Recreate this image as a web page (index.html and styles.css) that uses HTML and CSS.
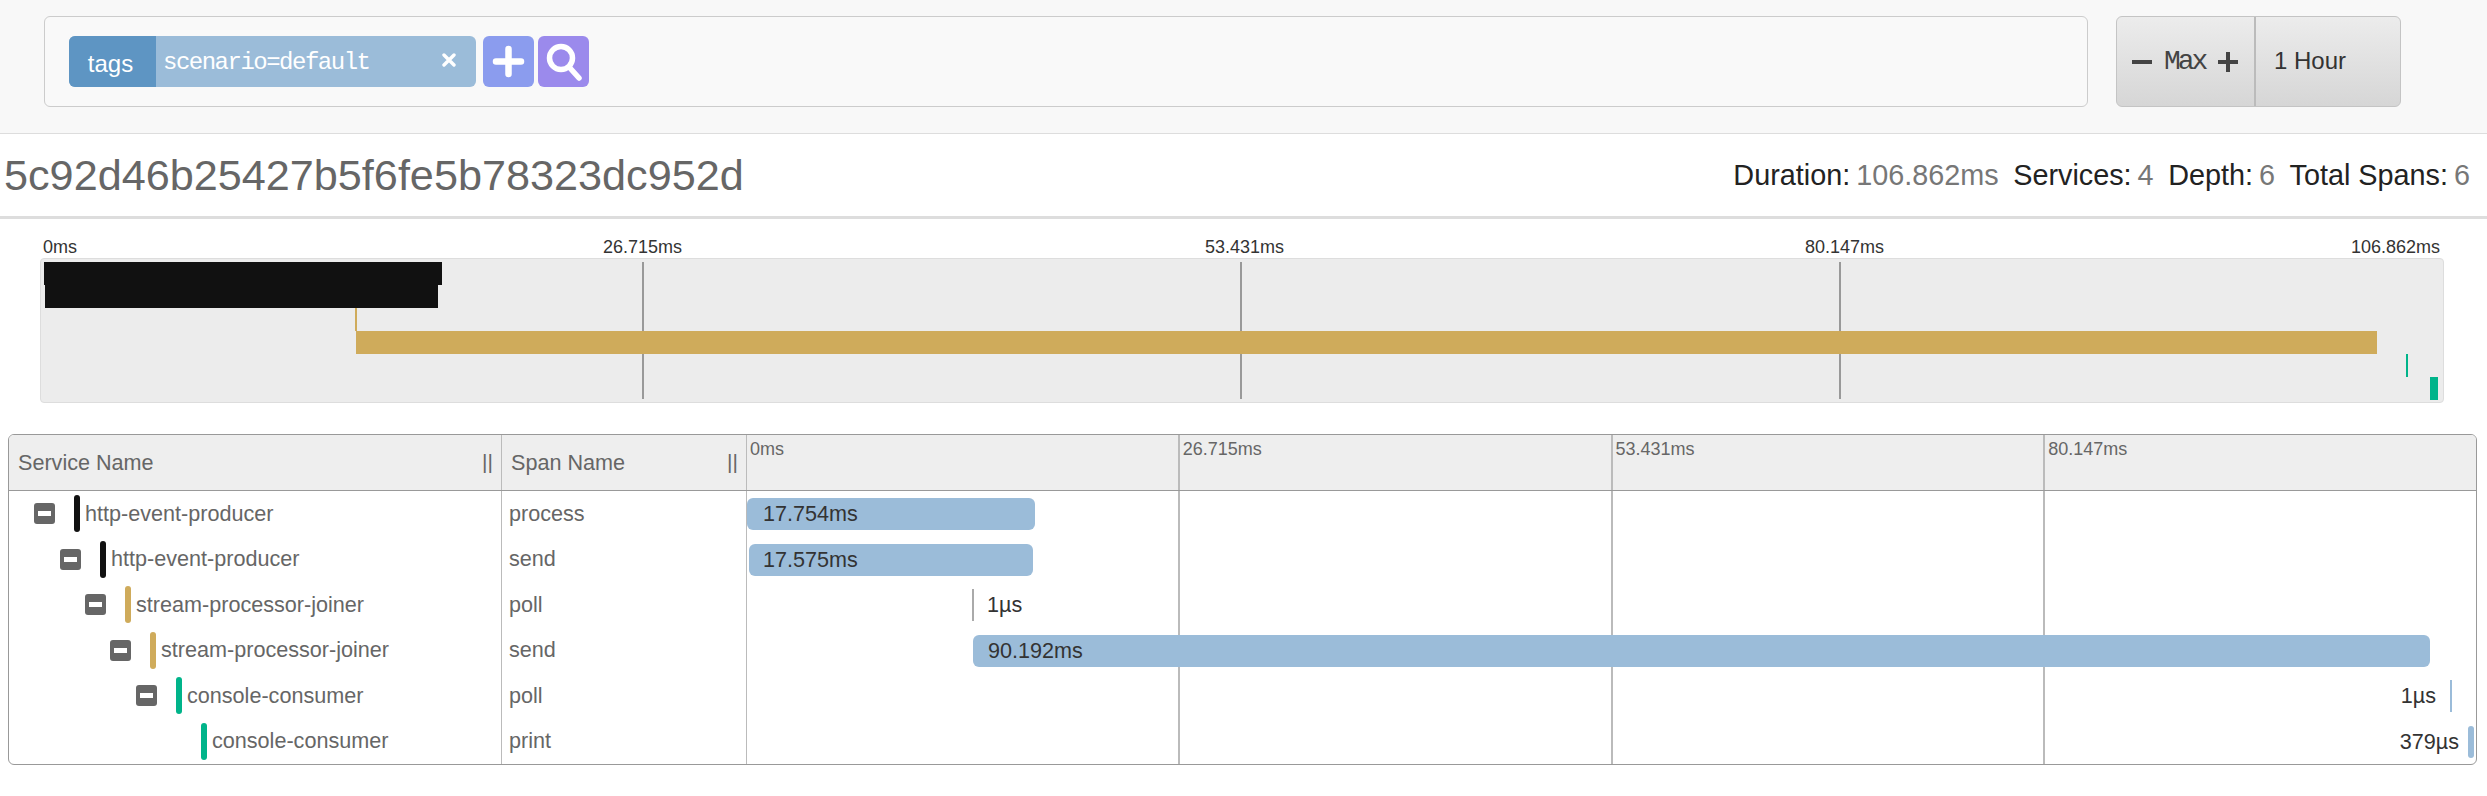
FILE: index.html
```html
<!DOCTYPE html>
<html lang="en">
<head>
    <meta charset="UTF-8">
    <title>Trace 5c92d46b25427b5f6fe5b78323dc952d</title>
    <link rel="stylesheet" href="styles.css">
</head>
<body>
    <header class="search-bar">
        <div class="search-box">
            <div class="tag">
                <span class="tag-key">tags</span>
                <span class="tag-value">scenario=default</span>
                <svg class="tag-close" width="14" height="14" viewBox="0 0 14 14"><path d="M2 2l10 10M12 2L2 12" stroke="#fff" stroke-width="3.4" stroke-linecap="round"/></svg>
            </div>
            <button class="icon-btn add-btn">
                <svg width="51" height="51" viewBox="0 0 51 51"><path d="M25.5 13v25M13 25.5h25" stroke="#fff" stroke-width="6.5" stroke-linecap="round" fill="none"/></svg>
            </button>
            <button class="icon-btn find-btn">
                <svg width="51" height="51" viewBox="0 0 51 51"><circle cx="23" cy="22" r="11.5" stroke="#fff" stroke-width="5.5" fill="none"/><path d="M32 32l9 10" stroke="#fff" stroke-width="5.5" stroke-linecap="round"/></svg>
            </button>
        </div>
        <div class="lookback">
            <div class="lookback-limit">
                <span class="lb-minus"></span>
                <span class="lb-max">Max</span>
                <span class="lb-plus"></span>
            </div>
            <div class="lookback-range">1 Hour</div>
        </div>
    </header>

    <div class="trace-head">
        <h1 class="trace-id">5c92d46b25427b5f6fe5b78323dc952d</h1>
        <div class="trace-stats">
            <span class="stat">Duration:<b>106.862ms</b></span>
            <span class="stat">Services:<b>4</b></span>
            <span class="stat">Depth:<b>6</b></span>
            <span class="stat">Total Spans:<b>6</b></span>
        </div>
    </div>

    <section class="minimap">
        <div class="mini-labels">
            <span class="mini-label" style="left: 3px">0ms</span>
            <span class="mini-label" style="left: 563px">26.715ms</span>
            <span class="mini-label" style="left: 1165px">53.431ms</span>
            <span class="mini-label" style="left: 1765px">80.147ms</span>
            <span class="mini-label last">106.862ms</span>
        </div>
        <div class="mini-graph">
            <i class="mini-tick" style="left: 601px"></i>
            <i class="mini-tick" style="left: 1199px"></i>
            <i class="mini-tick" style="left: 1798px"></i>
            <i class="mini-span black" style="left: 3px; top: 3px; width: 398px"></i>
            <i class="mini-span black" style="left: 4px; top: 26px; width: 393px"></i>
            <i class="mini-span gold" style="left: 314px; top: 49px; width: 2px"></i>
            <i class="mini-span gold" style="left: 315px; top: 72px; width: 2021px"></i>
            <i class="mini-span green" style="left: 2365px; top: 95px; width: 2px"></i>
            <i class="mini-span green" style="left: 2389px; top: 118px; width: 8px"></i>
        </div>
    </section>

    <section class="trace-table">
        <div class="row head-row">
            <div class="col-service">Service Name<span class="grip">||</span></div>
            <div class="col-span">Span Name<span class="grip">||</span></div>
            <div class="col-time">
                <span class="time-label">0ms</span>
                <span class="time-label">26.715ms</span>
                <span class="time-label">53.431ms</span>
                <span class="time-label">80.147ms</span>
            </div>
        </div>

        <div class="table-body">
            <div class="grid-lines">
                <i></i><i></i><i></i><i></i>
            </div>

            <div class="row">
                <div class="col-service depth-0"><span class="toggle"></span><span class="svc-bar black"></span>http-event-producer</div>
                <div class="col-span">process</div>
                <div class="col-time"><div class="bar" style="left: 0; width: 288px"></div><span class="bar-text" style="left: 16px">17.754ms</span></div>
            </div>
            <div class="row">
                <div class="col-service depth-1"><span class="toggle"></span><span class="svc-bar black"></span>http-event-producer</div>
                <div class="col-span">send</div>
                <div class="col-time"><div class="bar" style="left: 2px; width: 284px"></div><span class="bar-text" style="left: 16px">17.575ms</span></div>
            </div>
            <div class="row">
                <div class="col-service depth-2"><span class="toggle"></span><span class="svc-bar gold"></span>stream-processor-joiner</div>
                <div class="col-span">poll</div>
                <div class="col-time"><div class="bar thin gray" style="left: 225px"></div><span class="bar-text" style="left: 240px">1µs</span></div>
            </div>
            <div class="row">
                <div class="col-service depth-3"><span class="toggle"></span><span class="svc-bar gold"></span>stream-processor-joiner</div>
                <div class="col-span">send</div>
                <div class="col-time"><div class="bar" style="left: 226px; width: 1457px"></div><span class="bar-text" style="left: 241px">90.192ms</span></div>
            </div>
            <div class="row">
                <div class="col-service depth-4"><span class="toggle"></span><span class="svc-bar green"></span>console-consumer</div>
                <div class="col-span">poll</div>
                <div class="col-time"><span class="bar-text end" style="right: 40px">1µs</span><div class="bar thin" style="left: 1703px"></div></div>
            </div>
            <div class="row">
                <div class="col-service depth-5"><span class="svc-bar green"></span>console-consumer</div>
                <div class="col-span">print</div>
                <div class="col-time"><span class="bar-text end" style="right: 17px">379µs</span><div class="bar" style="left: 1721px; width: 6px"></div></div>
            </div>
        </div>
    </section>
</body>
</html>
```

FILE: styles.css
```css
body {
    margin: 0;
    background-color: #fff;
    font-family: "Liberation Sans", Arial, sans-serif;
    font-size: 21.6px;
    color: #666;
}

/* search bar */
.search-bar {
    display: flex;
    height: 134px;
    padding: 16px 0 0 44px;
    box-sizing: border-box;
    background-color: #f8f8f8;
    border-bottom: 1px solid #ddd;
}
.search-box {
    display: flex;
    align-items: center;
    width: 2044px;
    height: 91px;
    padding-left: 24px;
    box-sizing: border-box;
    background-color: #f9f9f9;
    border: 1px solid #ccc;
    border-radius: 6px;
}
.tag {
    display: flex;
    align-items: center;
    width: 407px;
    height: 51px;
    background-color: #9bbcd9;
    border-radius: 6px;
    overflow: hidden;
    color: #fff;
}
.tag-key {
    width: 87px;
    height: 51px;
    padding-right: 4px;
    box-sizing: border-box;
    line-height: 55px;
    text-align: center;
    background-color: #5e95c3;
    font-size: 24px;
}
.tag-value {
    flex: 1;
    padding: 2px 0 0 7px;
    font-family: "Liberation Mono", monospace;
    font-size: 24px;
    letter-spacing: -1.5px;
}
.tag-close {
    margin-right: 20px;
    margin-top: -4px;
}
.icon-btn {
    width: 51px;
    height: 51px;
    padding: 0;
    border: none;
    border-radius: 6px;
    cursor: pointer;
}
.icon-btn svg {
    display: block;
}
.add-btn {
    margin-left: 7px;
    background-color: #8b9cee;
}
.find-btn {
    margin-left: 4px;
    background-color: #9b8aec;
}

.lookback {
    display: flex;
    width: 285px;
    height: 91px;
    margin-left: 28px;
    box-sizing: border-box;
    border: 1px solid #c4c4c4;
    border-radius: 6px;
    background: linear-gradient(#ececec, #d6d6d6);
    color: #333;
}
.lookback-limit {
    display: flex;
    align-items: center;
    width: 139px;
    padding-left: 15px;
    box-sizing: border-box;
    border-right: 2px solid #bbb;
}
.lb-minus,
.lb-plus {
    position: relative;
    display: block;
    width: 20px;
    height: 4px;
    background-color: #444;
}
.lb-plus::after {
    content: "";
    position: absolute;
    left: 8px;
    top: -8px;
    width: 4px;
    height: 20px;
    background-color: #444;
}
.lb-max {
    width: 42px;
    margin: 0 12px;
    font-family: "Liberation Mono", monospace;
    font-size: 28px;
    letter-spacing: -3px;
    color: #444;
}
.lookback-range {
    padding-left: 18px;
    line-height: 88px;
    font-size: 24px;
}

/* trace heading */
.trace-head {
    display: flex;
    justify-content: space-between;
    align-items: center;
    height: 82px;
    padding: 0 17px 0 4px;
    border-bottom: 3px solid #ddd;
}
.trace-id {
    margin: 0;
    font-size: 43.2px;
    font-weight: normal;
    color: #666;
}
.trace-stats {
    display: flex;
    gap: 14.5px;
    font-size: 28.8px;
    color: #222;
}
.stat b {
    margin-left: 6px;
    font-weight: normal;
    color: #777;
}

/* minimap */
.minimap {
    margin-left: 40px;
    width: 2404px;
}
.mini-labels {
    position: relative;
    height: 39px;
    font-size: 18px;
    color: #333;
}
.mini-label {
    position: absolute;
    top: 18px;
    white-space: nowrap;
}
.mini-label.last {
    right: 4px;
}
.mini-graph {
    position: relative;
    height: 145px;
    box-sizing: border-box;
    background-color: #ececec;
    border: 1px solid #ddd;
    border-radius: 4px;
}
.mini-tick {
    position: absolute;
    top: 3px;
    width: 2px;
    height: 137px;
    background-color: #999;
}
.mini-span {
    position: absolute;
    height: 23px;
}
.mini-span.black { background-color: #111; }
.mini-span.gold { background-color: #cfab5b; }
.mini-span.green { background-color: #00b48a; }

/* table */
.trace-table {
    width: 2469px;
    margin: 31px 0 0 8px;
    box-sizing: border-box;
    border: 1px solid #999;
    border-radius: 6px;
    overflow: hidden;
}
.row {
    display: flex;
    height: 45.5px;
}
.col-service {
    position: relative;
    display: flex;
    align-items: center;
    width: 493px;
    box-sizing: border-box;
    border-right: 1px solid #bbb;
    white-space: nowrap;
}
.col-span {
    position: relative;
    display: flex;
    align-items: center;
    width: 245px;
    padding-left: 7px;
    box-sizing: border-box;
    border-right: 1px solid #bbb;
}
.col-time {
    position: relative;
    flex: 1;
}
.head-row {
    height: 56px;
    box-sizing: border-box;
    background-color: #eee;
    border-bottom: 1px solid #999;
}
.head-row .col-service,
.head-row .col-span {
    padding-left: 9px;
}
.grip {
    position: absolute;
    right: 8px;
    top: 15px;
    font-size: 21px;
}
.head-row .col-time {
    display: flex;
}
.time-label {
    flex: 1;
    padding: 4px 0 0 3px;
    font-size: 18px;
    border-left: 2px solid #bbb;
}
.time-label:first-child {
    border-left: none;
}

.table-body {
    position: relative;
}
.grid-lines {
    position: absolute;
    left: 738px;
    right: 0;
    top: 0;
    bottom: 0;
    display: flex;
}
.grid-lines i {
    flex: 1;
    border-left: 2px solid #bbb;
}
.grid-lines i:first-child {
    border-left: none;
}

.depth-0 { padding-left: 25px; }
.depth-1 { padding-left: 51px; }
.depth-2 { padding-left: 76px; }
.depth-3 { padding-left: 101px; }
.depth-4 { padding-left: 127px; }
.depth-5 { padding-left: 192px; }

.toggle {
    position: relative;
    width: 21px;
    height: 21px;
    margin-right: 19px;
    background-color: #666;
    border-radius: 3px;
}
.toggle::after {
    content: "";
    position: absolute;
    left: 4px;
    top: 8px;
    width: 13px;
    height: 5px;
    background-color: #fff;
}
.svc-bar {
    width: 6px;
    height: 37px;
    margin-right: 5px;
    border-radius: 3px;
}
.svc-bar.black { background-color: #111; }
.svc-bar.gold { background-color: #cfab5b; }
.svc-bar.green { background-color: #00b48a; }

.bar {
    position: absolute;
    top: 7px;
    height: 32px;
    background-color: #9bbcd9;
    border-radius: 6px;
}
.bar.thin {
    width: 2px;
    border-radius: 0;
}
.bar.gray {
    background-color: #aaa;
}
.bar-text {
    position: absolute;
    z-index: 1;
    top: 10px;
    color: #333;
}
```
